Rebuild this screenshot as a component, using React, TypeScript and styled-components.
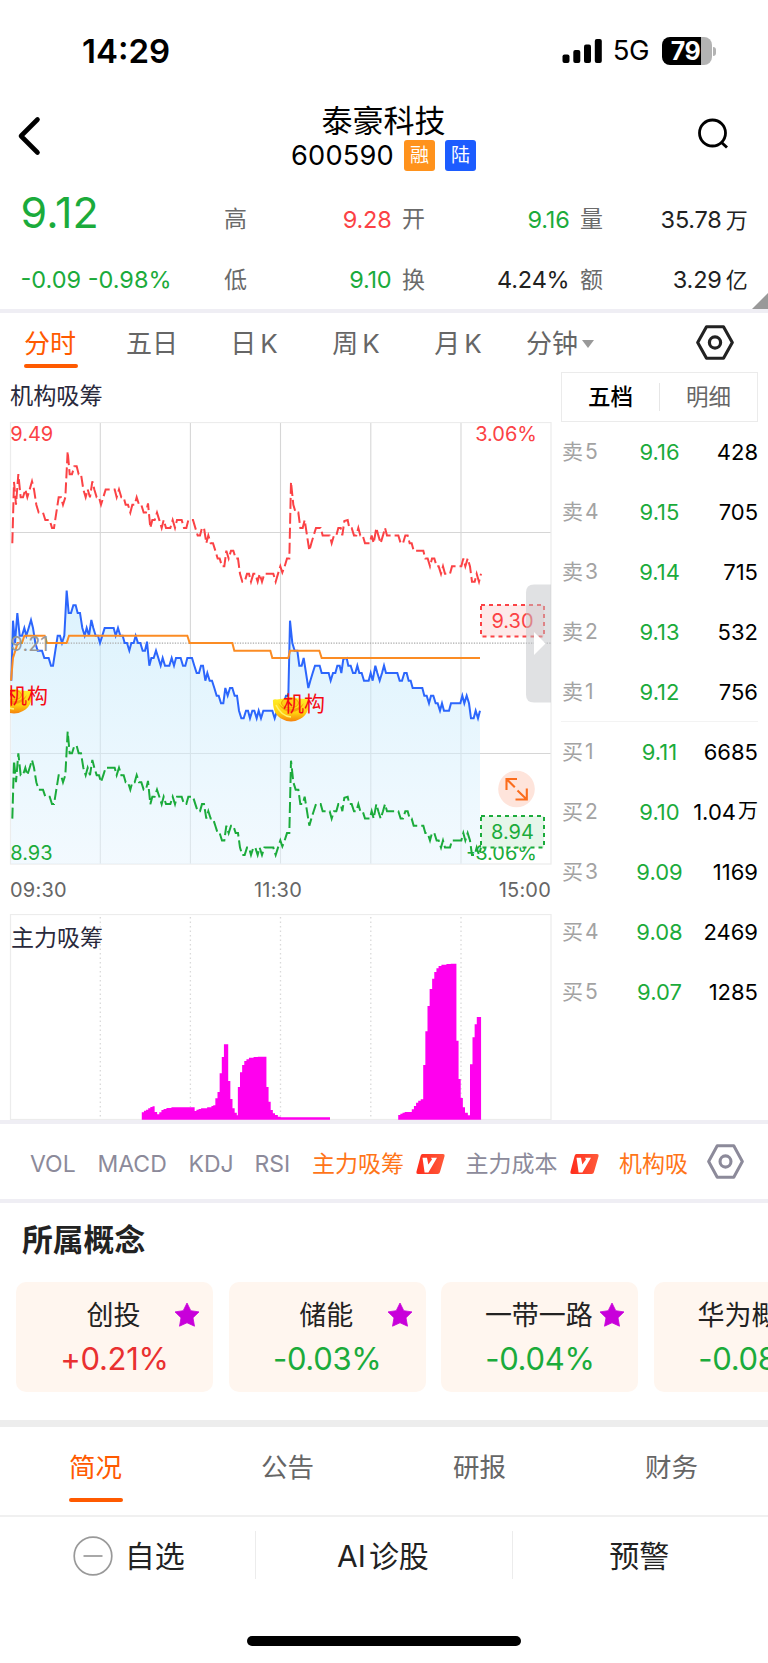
import React from 'react';
import styled, { createGlobalStyle } from 'styled-components';

const GREEN = '#1bab3b';
const RED = '#fb4245';
const ORANGE = '#ff5a00';
const BAND = '#efeef4';

const Global = createGlobalStyle`
  * { box-sizing: border-box; }
  body { margin: 0; background: #fff; }
`;

const Screen = styled.div`
  width: 768px;
  height: 1663px;
  overflow: hidden;
  display: flex;
  flex-direction: column;
  background: #fff;
  color: #000;
  font-family: Inter, 'Noto Sans CJK SC', sans-serif;
  line-height: 1;
  white-space: nowrap;
`;

const Label = styled.span<{ $size: number; $color?: string; $weight?: number; $track?: number }>`
  font-size: ${p => p.$size}px;
  color: ${p => p.$color ?? 'inherit'};
  font-weight: ${p => p.$weight ?? 400};
  letter-spacing: ${p => p.$track ?? 0}px;
`;

const Band = styled.div<{ $h: number; $color?: string }>`
  flex: none;
  height: ${p => p.$h}px;
  background: ${p => p.$color ?? BAND};
`;

/* ---------- status bar ---------- */

const StatusBar = styled.div`
  flex: none;
  height: 102px;
  display: flex;
  align-items: center;
  justify-content: space-between;
  padding: 0 52px 0 82px;
`;

const StatusRight = styled.div`
  display: flex;
  align-items: center;
`;

const Signal = styled.svg`
  margin-right: 11px;
`;

const Battery = styled.div`
  width: 50px;
  height: 28px;
  margin-left: 13px;
  padding-right: 3px;
  border-radius: 8px;
  display: flex;
  align-items: center;
  justify-content: center;
  background: linear-gradient(90deg, #000 0 39px, #b3b3b3 39px);
`;

const BatteryNub = styled.div`
  width: 3px;
  height: 9px;
  margin-left: 1px;
  border-radius: 0 3px 3px 0;
  background: #b3b3b3;
`;

/* ---------- header ---------- */

const Header = styled.header`
  flex: none;
  height: 82px;
  display: flex;
  justify-content: space-between;
  padding: 0 38px 0 17px;
`;

const TitleBlock = styled.div`
  display: flex;
  flex-direction: column;
  align-items: center;
  margin-left: 29px;
`;

const TitleRow = styled.div<{ $h: number }>`
  height: ${p => p.$h}px;
  display: flex;
  align-items: center;
`;

const Tag = styled.span<{ $bg: string; $gap: number }>`
  width: 31px;
  height: 31px;
  margin-left: ${p => p.$gap}px;
  border-radius: 3px;
  display: flex;
  align-items: center;
  justify-content: center;
  font-size: 19px;
  color: #fff;
  background: ${p => p.$bg};
`;

const IconBox = styled.svg<{ $mt: number }>`
  flex: none;
  margin-top: ${p => p.$mt}px;
`;

/* ---------- quote ---------- */

const Quote = styled.section`
  flex: none;
  position: relative;
  height: 125px;
  display: grid;
  grid-template-columns: 193px repeat(3, 167.5px);
  grid-template-rows: 71px 50px;
  column-gap: 10.5px;
  padding-left: 20.5px;
`;

const Stat = styled.div<{ $color: string }>`
  display: flex;
  align-items: center;
  justify-content: space-between;
  font-size: 23.5px;
  letter-spacing: -0.2px;
  color: ${p => p.$color};
`;

const StatName = styled.span`
  font-size: 23px;
  color: #6b6b6b;
`;

const Unit = styled.span`
  margin-left: 4px;
  font-size: 22px;
`;

const PriceCell = styled.div<{ $up: number }>`
  display: flex;
  align-items: center;
  padding-bottom: ${p => p.$up}px;
`;

const Corner = styled.i`
  position: absolute;
  right: 0;
  bottom: 0;
  border-left: 16px solid transparent;
  border-bottom: 16px solid #999;
`;

/* ---------- period tabs ---------- */

const PeriodTabs = styled.nav`
  flex: none;
  height: 59px;
  display: flex;
`;

const Period = styled.div<{ $on?: boolean }>`
  width: 102px;
  height: 59px;
  display: flex;
  flex-direction: column;
  align-items: center;
  color: ${p => (p.$on ? ORANGE : '#666')};
`;

const PeriodText = styled.div`
  height: 51px;
  padding: 11px 2px 0 0;
  display: flex;
  align-items: center;
  gap: 4px;
  font-size: 26px;
`;

const Underline = styled.i`
  width: 54px;
  height: 4px;
  border-radius: 2px;
  background: ${ORANGE};
`;

const Caret = styled.i`
  border: 6px solid transparent;
  border-top: 8px solid #999;
  border-bottom: 0;
`;

/* ---------- chart area ---------- */

const Market = styled.main`
  flex: none;
  height: 748px;
  display: flex;
`;

const Charts = styled.div`
  width: 561px;
  display: flex;
  flex-direction: column;
`;

const ChartTitle = styled.div`
  height: 50px;
  padding: 1px 0 0 10px;
  line-height: 46px;
  font-size: 23.2px;
  color: #2a2a3c;
`;

const Axis = styled.div`
  height: 49px;
  display: grid;
  grid-template-columns: 180px 1fr 180px;
  align-items: center;
  padding: 0 10px;
  font-size: 20px;
  letter-spacing: 0.2px;
  text-align: center;
  color: #666;
  span:first-child { text-align: left; }
  span:nth-child(2) { padding-right: 5px; }
  span:last-child { text-align: right; }
`;

const Book = styled.aside`
  width: 197px;
  display: flex;
  flex-direction: column;
`;

const BookTabs = styled.div`
  flex: none;
  height: 50px;
  display: flex;
  align-items: center;
  border: 1.5px solid #ebebeb;
`;

const BookTab = styled.div<{ $on?: boolean }>`
  flex: 1;
  height: 28px;
  display: flex;
  align-items: center;
  justify-content: center;
  font-size: 22.5px;
  font-weight: ${p => (p.$on ? 500 : 400)};
  color: ${p => (p.$on ? '#000' : '#666')};
  & + & { border-left: 1px solid #e6e6e6; }
`;

const BookSide = styled.div`
  flex: none;
  height: 300px;
  & + & { margin-top: -1px; border-top: 1px solid #f3f3f3; }
`;

const BookRow = styled.div`
  height: 60px;
  display: grid;
  grid-template-columns: 60px 77px 60px;
  align-items: center;
  padding-bottom: 1px;
  font-size: 22px;
`;

const BookName = styled.span`
  display: flex;
  gap: 2px;
  padding-left: 1px;
  font-size: 21px;
  color: #a3a3a3;
`;

const BookPrice = styled.span`
  text-align: center;
  color: ${GREEN};
`;

const BookVolume = styled.span`
  display: flex;
  justify-content: flex-end;
`;

const VolumeUnit = styled.span`
  margin-left: 2px;
  font-size: 20px;
`;

/* ---------- indicators ---------- */

const Indicators = styled.nav`
  flex: none;
  height: 75px;
  display: flex;
  align-items: center;
  padding-left: 30px;
`;

const Indicator = styled.div<{ $w: number; $on?: boolean }>`
  width: ${p => p.$w}px;
  padding-top: 5px;
  flex: none;
  display: flex;
  align-items: center;
  gap: 12px;
  font-size: 23px;
  color: ${p => (p.$on ? '#ff7519' : '#8c8a9a')};
`;

/* ---------- concepts ---------- */

const Concepts = styled.section`
  flex: none;
  height: 217px;
  display: flex;
  flex-direction: column;
`;

const Heading = styled.h2`
  margin: 0;
  height: 79px;
  padding: 0 0 4px 22px;
  display: flex;
  align-items: center;
  font-size: 30.8px;
  font-weight: 700;
  color: #222;
`;

const Cards = styled.div`
  display: flex;
  gap: 15.7px;
  padding-left: 16px;
`;

const Card = styled.div`
  position: relative;
  flex: none;
  width: 197px;
  height: 110px;
  border-radius: 10px;
  display: flex;
  flex-direction: column;
  align-items: center;
  background: #fff6ef;
`;

const CardName = styled.div`
  margin-top: 20px;
  padding-right: 2px;
  font-size: 27px;
  color: #222;
`;

const CardChange = styled.div<{ $up?: boolean }>`
  margin-top: 14px;
  font-size: 31px;
  letter-spacing: -0.3px;
  color: ${p => (p.$up ? '#e93030' : GREEN)};
`;

const CardStar = styled.svg`
  position: absolute;
  right: 13px;
  top: 20px;
`;

/* ---------- bottom ---------- */

const InfoTabs = styled.nav`
  flex: none;
  height: 90px;
  display: flex;
  border-bottom: 2px solid #f0f0f0;
`;

const InfoTab = styled.div<{ $on?: boolean }>`
  flex: 1;
  display: flex;
  flex-direction: column;
  align-items: center;
  font-size: 26.5px;
  color: ${p => (p.$on ? ORANGE : '#666')};
`;

const InfoText = styled.span`
  height: 71px;
  padding: 27px 1px 0 0;
`;

const Actions = styled.footer`
  flex: none;
  height: 119px;
  display: flex;
  padding-top: 14px;
`;

const Action = styled.div`
  flex: 1;
  height: 48px;
  padding: 1px 2px 0 0;
  display: flex;
  align-items: center;
  justify-content: center;
  gap: 3px;
  font-size: 30px;
  color: #222;
  & + & { border-left: 1.5px solid #ececec; }
`;

const MinusIcon = styled.svg`
  margin: 0 9px 0 4px;
`;

const HomeBar = styled.div`
  width: 274px;
  height: 10px;
  border-radius: 5px;
  align-self: center;
  background: #000;
`;

/* ---------- data ---------- */

// Prices are stored on a grid three times finer than the screen, relative to y = 1800.
const price: number[] = [
  34,242, 39,62, 45,129, 52,39, 59,107, 66,107, 73,84, 79,107, 86,84, 93,60, 99,84, 106,129, 113,152, 126,152,
  133,174, 146,174, 153,197, 159,197, 166,152, 173,107, 180,107, 186,129, 193,107, 200,-28, 206,39, 213,39,
  220,16, 227,16, 233,39, 240,39, 247,84, 254,107, 260,84, 267,107, 274,60, 280,84, 287,107, 294,107, 300,129,
  307,107, 314,84, 341,84, 347,107, 354,84, 361,107, 368,107, 374,129, 381,129, 388,152, 394,129, 401,129,
  407,107, 414,129, 421,129, 428,152, 435,152, 441,125, 448,197, 454,174, 461,174, 468,152, 475,174, 482,197,
  488,174, 495,197, 508,197, 515,174, 522,197, 528,174, 542,174, 549,197, 556,197, 562,174, 576,174, 583,197,
  590,219, 597,219, 603,197, 609,197, 616,242, 622,219, 629,242, 636,242, 643,264, 650,287, 656,287, 663,310,
  670,310, 676,264, 683,287, 690,264, 697,264, 704,287, 711,287, 717,332, 724,355, 731,355, 738,332, 744,332,
  750,355, 757,332, 763,332, 770,355, 776,332, 783,355, 790,332, 817,332, 824,355, 831,332, 838,310, 844,328,
  851,310, 858,287, 865,287, 870,62, 877,129, 884,152, 892,152, 898,197, 905,197, 911,174, 918,219, 925,264,
  931,242, 938,219, 945,197, 959,197, 965,219, 986,219, 992,242, 999,219, 1006,219, 1012,197, 1019,197,
  1024,219, 1030,177, 1040,174, 1045,197, 1052,197, 1059,219, 1066,219, 1072,197, 1078,219, 1085,219,
  1092,242, 1106,242, 1112,219, 1118,242, 1126,197, 1132,219, 1139,242, 1146,219, 1152,197, 1158,219,
  1192,219, 1199,242, 1206,242, 1213,219, 1220,219, 1226,242, 1232,242, 1238,264, 1267,264, 1273,287,
  1280,287, 1287,310, 1293,287, 1300,287, 1307,310, 1313,310, 1320,332, 1326,310, 1332,332, 1347,332,
  1353,310, 1381,310, 1387,287, 1393,310, 1400,287, 1407,310, 1413,355, 1421,355, 1427,332, 1434,355, 1440,332,
];

const average: number[] = [
  33,242, 39,174, 46,152, 53,129, 66,129, 73,107, 134,107, 141,129, 200,129, 207,107, 562,107, 569,129,
  697,129, 703,152, 811,152, 817,174, 865,174, 870,152, 958,152, 965,174, 1440,174,
];

// The chart svg starts at screen y = 422.
const line = (pts: number[], dx = 0, k = 1, base = 1772): string => {
  const out: string[] = [];
  for (let i = 0; i < pts.length; i += 2) {
    const y = base + (pts[i + 1] + 28) * k;
    out.push(`${((pts[i] + dx) / 3).toFixed(2)},${(y / 3 - 422).toFixed(2)}`);
  }
  return out.join(' ');
};

// Each entry: left edge and top of a step, on a grid of 2.8 by 3 per pixel; top 659 is the floor.
const steps: number[] = [
  397,637, 403,632, 409,629, 415,625, 421,621, 427,619, 433,636, 440,643, 446,637, 452,630, 458,627, 466,624,
  480,622, 545,633, 550,629, 556,627, 563,625, 580,622, 592,618, 597,616, 603,595, 609,576, 615,520, 621,471,
  627,433, 639,543, 645,597, 651,625, 657,638, 663,646, 666,561, 672,517, 678,495, 684,483, 690,478, 697,473,
  710,471, 722,470, 746,561, 752,605, 758,630, 764,640, 770,645, 778,650, 786,652, 924,659,
  1115,645, 1121,641, 1127,638, 1133,636, 1153,628, 1159,618, 1165,608, 1171,602, 1178,598, 1185,495,
  1191,394, 1197,318, 1203,267, 1210,236, 1216,216, 1222,205, 1228,198, 1236,194, 1250,192, 1262,191,
  1278,422, 1284,537, 1290,594, 1296,622, 1302,638, 1310,646, 1316,493, 1323,412, 1329,373, 1335,351, 1347,659,
];

const stepPath = (): string => {
  let d = 'M 397 659';
  for (let i = 0; i < steps.length; i += 2) d += ` H ${steps[i]} V ${steps[i + 1]}`;
  return `${d} Z`;
};

const columns = [100.3, 190.4, 280.5, 370.8, 461];

const stats = [
  ['高', '9.28', '', RED], ['开', '9.16', '', GREEN], ['量', '35.78', '万', '#222'],
  ['低', '9.10', '', GREEN], ['换', '4.24%', '', '#222'], ['额', '3.29', '亿', '#222'],
];

const asks = [['5', '9.16', '428'], ['4', '9.15', '705'], ['3', '9.14', '715'], ['2', '9.13', '532'], ['1', '9.12', '756']];
const bids = [['1', '9.11', '6685'], ['2', '9.10', '1.04万'], ['3', '9.09', '1169'], ['4', '9.08', '2469'], ['5', '9.07', '1285']];
const concepts = [['创投', '+0.21%'], ['储能', '-0.03%'], ['一带一路', '-0.04%'], ['华为概念', '-0.08%']];

/* ---------- drawings ---------- */

const HexIcon = ({ color, mt, ml, w = 38, h = 35 }: { color: string; mt: number; ml: number; w?: number; h?: number }) => (
  <IconBox $mt={mt} width={w} height={h} viewBox="0 0 38 35" style={{ marginLeft: ml }} preserveAspectRatio="none">
    <path d="M10.5 1.7 H27.5 L36.3 17.5 L27.5 33.3 H10.5 L1.7 17.5 Z" fill="none" stroke={color} strokeWidth="3.1" strokeLinejoin="round" />
    <circle cx="19" cy="17.5" r="5.6" fill="none" stroke={color} strokeWidth="3.2" />
  </IconBox>
);

const VipMark = ({ id }: { id: string }) => (
  <svg width="29" height="20" viewBox="0 0 29 20">
    <defs>
      <linearGradient id={id} x1="0" x2="1">
        <stop offset="0" stopColor="#ff2d1c" />
        <stop offset="1" stopColor="#ff5a3a" />
      </linearGradient>
    </defs>
    <path d="M6.5 0 H27 Q29 0 28.6 2 L24 18 Q23.600 20 21.600 20 H2 Q0 20 .4 18 L4.600 2 Q5 0 6.500 0 Z" fill={`url(#${id})`} />
    <path d="M6.500 3.800 H11 L12.300 10.500 L16 5.600 L15 3.800 H21 L12.400 18.600 H8.600 Z" fill="#fff" />
  </svg>
);

const Ingot = ({ x, y }: { x: number; y: number }) => (
  <g transform={`translate(${x} ${y})`}>
    <path d="M-18 -6 Q-19 -9.500 -14 -8.500 L-7 -9.500 Q0 -12 7 -9.500 L14 -9 Q19 -10 18 -6 C18 2 15 8 9 11 Q0 16 -9 11 C-15 8 -18 2 -18 -6 Z" fill="url(#ingot)" />
    <path d="M-13 -5 Q-8 4 0 4 Q9 4 13 -5 Q8 1 0 1 Q-8 1 -13 -5 Z" fill="#f3a408" />
    <ellipse cx="-1" cy="-5" rx="8.500" ry="5" fill="#ffcf14" stroke="#f0a000" strokeWidth="1" />
    <path d="M-15 -3 Q-10 8 0 9" fill="none" stroke="#fff36b" strokeWidth="1.500" />
  </g>
);

const PriceChart = () => (
  <svg width="561" height="443" viewBox="0 0 561 443" fontFamily="Inter, sans-serif">
    <defs>
      <linearGradient id="area" x1="0" y1="0" x2="0" y2="1">
        <stop offset="0" stopColor="#bfe8fb" stopOpacity="0.55" />
        <stop offset="1" stopColor="#e6f4fe" stopOpacity="0.5" />
      </linearGradient>
      <linearGradient id="ingot" x1="0" y1="0" x2="0" y2="1">
        <stop offset="0" stopColor="#fff02a" />
        <stop offset="0.65" stopColor="#ffd00e" />
        <stop offset="1" stopColor="#f5800c" />
      </linearGradient>
      <clipPath id="plot"><rect x="10" y="0" width="542" height="443" /></clipPath>
    </defs>
    <g stroke="#d6d6d6" strokeWidth="1.1">
      {columns.map(x => <path key={x} d={`M${x} 0 V442`} />)}
      <path d="M10 110.5 H551 M10 331.5 H551" />
    </g>
    <rect x="10.5" y="0.5" width="540.5" height="441.5" fill="none" stroke="#ececec" strokeWidth="1.2" />
    <polygon points={`${line(price)} 480,442 11,442`} fill="url(#area)" />
    <path d="M11 221.2 H551" stroke="#aaa" strokeWidth="1.2" strokeDasharray="1.3 1.3" />
    <g fill="none" strokeWidth="2" strokeLinejoin="miter">
      <polyline points={line(price)} stroke="#2c66fc" />
      <polyline points={line(average)} stroke="#fb8c24" />
      <polyline points={line(price, 3, 1.021, 1354)} stroke={RED} strokeDasharray="11 4" />
      <polyline points={line(price, 3, 0.966, 2195)} stroke={GREEN} strokeDasharray="11 4" />
    </g>
    <text x="10.5" y="228.5" fontSize="20" fill="#999">9.21</text>
    <g clipPath="url(#plot)">
      <Ingot x={14} y={278} />
      <Ingot x={291} y={286} />
      <g fontSize="21" fill="#f50a14" fontFamily="'Noto Sans CJK SC', sans-serif">
        <text x="6" y="281">机构</text>
        <text x="283" y="289">机构</text>
      </g>
    </g>
    <g fontSize="20">
      <text x="10.3" y="18.7" fill={RED}>9.49</text>
      <text x="537" y="18.7" fill={RED} textAnchor="end">3.06%</text>
      <text x="10.3" y="437.7" fill={GREEN}>8.93</text>
      <text x="537" y="437.7" fill={GREEN} textAnchor="end">-3.06%</text>
    </g>
    <circle cx="516.5" cy="367" r="18.3" fill="#fee4db" />
    <path d="M506.500 368 V357 H517 M506.500 357 L514.800 365.200 M517.500 368.500 L526.800 377.500 M515.500 377.500 H526.800 V366.500" fill="none" stroke="#fb6c1c" strokeWidth="2.100" />
    <g strokeWidth="2" fontSize="20">
      <rect x="481" y="183" width="63" height="31.5" fill="#fdeaea" stroke={RED} strokeDasharray="4 4" />
      <text x="512.5" y="206" fill={RED} textAnchor="middle">9.30</text>
      <rect x="481" y="394" width="63" height="31.5" fill="#e6f6ea" stroke={GREEN} strokeDasharray="4 4" />
      <text x="512.5" y="417" fill={GREEN} textAnchor="middle">8.94</text>
    </g>
    <path d="M551 162.5 H534 Q526 162.5 526 170.5 V272.500 Q526 280.500 534 280.500 H551 Z" fill="#c1c3c7" fillOpacity="0.5" />
    <path d="M534 210 L545.500 221.500 L534 233 Z" fill="#fff" />
  </svg>
);

const FlowChart = () => (
  <svg width="561" height="206" viewBox="0 0 561 206">
    <rect x="10.500" y="0.500" width="540.500" height="205" fill="none" stroke="#ececec" strokeWidth="1.200" />
    <g stroke="#d9d9d9" strokeWidth="1.300" strokeDasharray="1.500 3">
      {columns.map(x => <path key={x} d={`M${x} 3 V204`} />)}
    </g>
    <text x="11" y="31.500" fontSize="23" fill="#2a2a3c" fontFamily="'Noto Sans CJK SC', sans-serif">主力吸筹</text>
    <path d={stepPath()} transform="translate(0 -14) scale(0.35714 0.33333)" fill="#ff00ee" />
  </svg>
);

const Volume = ({ text }: { text: string }) => (
  <BookVolume>
    {text.replace('万', '')}
    {text.includes('万') && <VolumeUnit>万</VolumeUnit>}
  </BookVolume>
);

const Level = ({ side, row }: { side: string; row: string[] }) => (
  <BookRow>
    <BookName><span>{side}</span><span>{row[0]}</span></BookName>
    <BookPrice>{row[1]}</BookPrice>
    <Volume text={row[2]} />
  </BookRow>
);

export default function App() {
  return (
    <Screen>
      <Global />
      <StatusBar>
        <Label $size={33} $weight={600} $track={0}>14:29</Label>
        <StatusRight>
          <Signal width="40" height="24" viewBox="0 0 40 24">
            <rect x="0.5" y="15.500" width="7" height="8.500" rx="2" />
            <rect x="11.300" y="11" width="7" height="13" rx="2" />
            <rect x="22" y="5.500" width="7" height="18.500" rx="2" />
            <rect x="32.800" y="0" width="7" height="24" rx="2" />
          </Signal>
          <Label $size={27.500} $track={-0.5}>5G</Label>
          <Battery><Label $size={25} $weight={700} $color="#fff" $track={-0.5}>79</Label></Battery>
          <BatteryNub />
        </StatusRight>
      </StatusBar>

      <Header>
        <IconBox $mt={13} width="24" height="42" viewBox="0 0 24 42">
          <path d="M20.500 4.500 L4 21 L20.500 37.500" fill="none" stroke="#000" strokeWidth="4.600" strokeLinecap="round" strokeLinejoin="round" />
        </IconBox>
        <TitleBlock>
          <TitleRow $h={36}><Label $size={31}>泰豪科技</Label></TitleRow>
          <TitleRow $h={35}>
            <Label $size={27.2} $track={0.2}>600590</Label>
            <Tag $bg="#ff921c" $gap={10}>融</Tag>
            <Tag $bg="#1c5cff" $gap={10}>陆</Tag>
          </TitleRow>
        </TitleBlock>
        <IconBox $mt={15} width="33" height="34" viewBox="0 0 33 34">
          <circle cx="15.500" cy="16" r="13" fill="none" stroke="#000" strokeWidth="2.800" />
          <path d="M24 25 L30 30.500" stroke="#000" strokeWidth="3" />
        </IconBox>
      </Header>

      <Quote>
        <PriceCell $up={15}><Label $size={43} $color={GREEN} $track={0.1}>9.12</Label></PriceCell>
        {stats.slice(0, 3).map(s => (
          <Stat key={s[0]} $color={s[3]}><StatName>{s[0]}</StatName><span>{s[1]}{s[2] && <Unit>{s[2]}</Unit>}</span></Stat>
        ))}
        <PriceCell $up={0}><Label $size={23.5} $color={GREEN}>-0.09 -0.98%</Label></PriceCell>
        {stats.slice(3).map(s => (
          <Stat key={s[0]} $color={s[3]}><StatName>{s[0]}</StatName><span>{s[1]}{s[2] && <Unit>{s[2]}</Unit>}</span></Stat>
        ))}
        <Corner />
      </Quote>
      <Band $h={4} />

      <PeriodTabs>
        <Period $on><PeriodText>分时</PeriodText><Underline /></Period>
        <Period><PeriodText>五日</PeriodText></Period>
        {['日', '周', '月'].map(t => (
          <Period key={t}><PeriodText><span>{t}</span><span>K</span></PeriodText></Period>
        ))}
        <Period><PeriodText>分钟<Caret /></PeriodText></Period>
        <HexIcon color="#222" mt={12} ml={84} />
      </PeriodTabs>

      <Market>
        <Charts>
          <ChartTitle>机构吸筹</ChartTitle>
          <PriceChart />
          <Axis><span>09:30</span><span>11:30</span><span>15:00</span></Axis>
          <FlowChart />
        </Charts>
        <Book>
          <BookTabs><BookTab $on>五档</BookTab><BookTab>明细</BookTab></BookTabs>
          <BookSide>{asks.map(r => <Level key={r[0]} side="卖" row={r} />)}</BookSide>
          <BookSide>{bids.map(r => <Level key={r[0]} side="买" row={r} />)}</BookSide>
        </Book>
      </Market>
      <Band $h={4} />

      <Indicators>
        <Indicator $w={67.500}>VOL</Indicator>
        <Indicator $w={91}>MACD</Indicator>
        <Indicator $w={66}>KDJ</Indicator>
        <Indicator $w={57.500}>RSI</Indicator>
        <Indicator $w={153.500} $on>主力吸筹<VipMark id="vip-a" /></Indicator>
        <Indicator $w={153.500}>主力成本<VipMark id="vip-b" /></Indicator>
        <Indicator $w={88} $on>机构吸</Indicator>
        <HexIcon color="#8c8a9a" mt={0} ml={0} w={37} />
      </Indicators>
      <Band $h={4} />

      <Concepts>
        <Heading>所属概念</Heading>
        <Cards>
          {concepts.map((c, i) => (
            <Card key={c[0]}>
              <CardName>{c[0]}</CardName>
              <CardChange $up={i === 0}>{c[1]}</CardChange>
              <CardStar width="26" height="26" viewBox="0 0 26 26">
                <path d="M13 1 L16.800 8.700 L25 9.900 L19 15.800 L20.500 24.200 L13 20.800 L5.500 24.200 L7 15.800 L1 9.900 L9.200 8.700 Z" fill="#c800da" stroke="#c800da" strokeWidth="0.800" strokeLinejoin="round" />
              </CardStar>
            </Card>
          ))}
        </Cards>
      </Concepts>
      <Band $h={7} $color="#ededed" />

      <InfoTabs>
        <InfoTab $on><InfoText>简况</InfoText><Underline /></InfoTab>
        <InfoTab><InfoText>公告</InfoText></InfoTab>
        <InfoTab><InfoText>研报</InfoText></InfoTab>
        <InfoTab><InfoText>财务</InfoText></InfoTab>
      </InfoTabs>
      <Actions>
        <Action>
          <MinusIcon width="40" height="40" viewBox="0 0 40 40">
            <circle cx="20" cy="20" r="18.800" fill="none" stroke="#999" strokeWidth="1.700" />
            <path d="M10.500 20 H29.500" stroke="#999" strokeWidth="1.700" />
          </MinusIcon>
          自选
        </Action>
        <Action><span>AI</span><span>诊股</span></Action>
        <Action>预警</Action>
      </Actions>
      <HomeBar />
    </Screen>
  );
}
